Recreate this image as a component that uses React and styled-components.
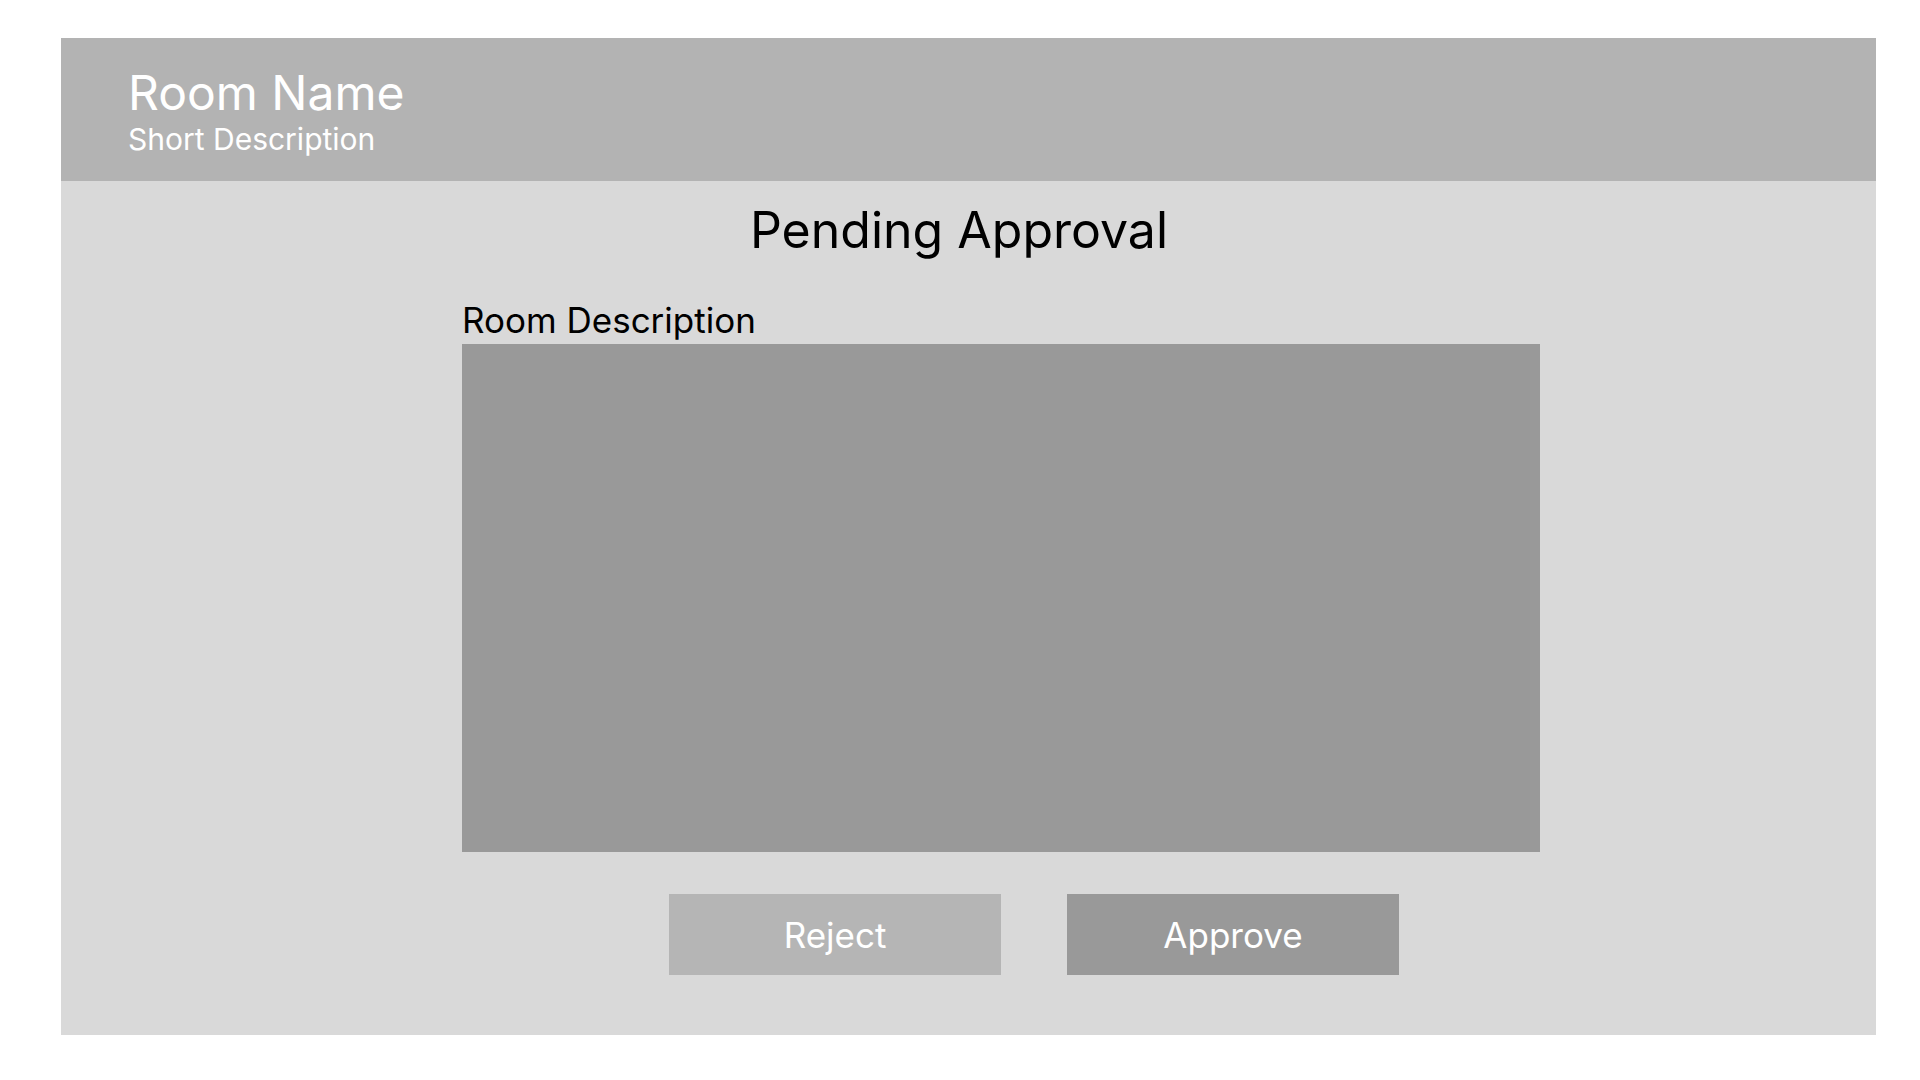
import React, { useState } from 'react'
import styled, { createGlobalStyle } from 'styled-components'

export default function App() {
  const [description, setDescription] = useState('')

  return (
    <>
      <GlobalStyle />
      <Card>
        <Header>
          <RoomName>Room Name</RoomName>
          <ShortDescription>Short Description</ShortDescription>
        </Header>
        <Body>
          <Title>Pending Approval</Title>
          <Form>
            <Label htmlFor="description">Room Description</Label>
            <DescriptionArea
              id="description"
              name="description"
              value={description}
              onChange={(event) => setDescription(event.target.value)}
            />
            <Actions>
              <ActionButton type="button" tone="#b5b5b5">
                Reject
              </ActionButton>
              <ActionButton type="button" tone="#999999">
                Approve
              </ActionButton>
            </Actions>
          </Form>
        </Body>
      </Card>
    </>
  )
}

const GlobalStyle = createGlobalStyle`
  * {
    box-sizing: border-box;
  }

  body {
    margin: 0;
    background: #ffffff;
    font-family: Inter, "Noto Sans", "Liberation Sans", sans-serif;
  }
`

const Card = styled.div`
  display: flex;
  flex-direction: column;
  height: 997px;
  margin: 38px 44px 45px 61px;
  background: #d9d9d9;
`

const Header = styled.header`
  display: flex;
  flex-direction: column;
  height: 143px;
  padding: 30px 0 0 67px;
  background: #b3b3b3;
  color: #ffffff;
`

const RoomName = styled.h1`
  margin: 0;
  font-size: 48px;
  font-weight: 400;
  line-height: 49px;
`

const ShortDescription = styled.p`
  margin: 7px 0 0;
  font-size: 30px;
  font-weight: 400;
  line-height: 30px;
`

const Body = styled.main`
  display: flex;
  flex-direction: column;
  padding-top: 24px;
`

const Title = styled.h2`
  margin: 0;
  padding-right: 19px;
  text-align: center;
  font-size: 50px;
  font-weight: 400;
  line-height: 50px;
  color: #000000;
`

const Form = styled.form`
  display: flex;
  flex-direction: column;
  width: 1078px;
  margin: 48px 0 0 401px;
`

const Label = styled.label`
  font-size: 35px;
  line-height: 35px;
  color: #000000;
`

const DescriptionArea = styled.textarea`
  display: block;
  width: 100%;
  height: 508px;
  margin-top: 6px;
  padding: 16px;
  border: none;
  outline: none;
  resize: none;
  background: #999999;
  font-family: inherit;
  font-size: 24px;
  color: #ffffff;
`

const Actions = styled.div`
  display: flex;
  gap: 66px;
  margin-top: 42px;
  padding-left: 207px;
`

const ActionButton = styled.button`
  width: 332px;
  height: 81px;
  border: none;
  background: ${(props) => props.tone};
  color: #ffffff;
  font-family: inherit;
  font-size: 35px;
  cursor: pointer;
`
